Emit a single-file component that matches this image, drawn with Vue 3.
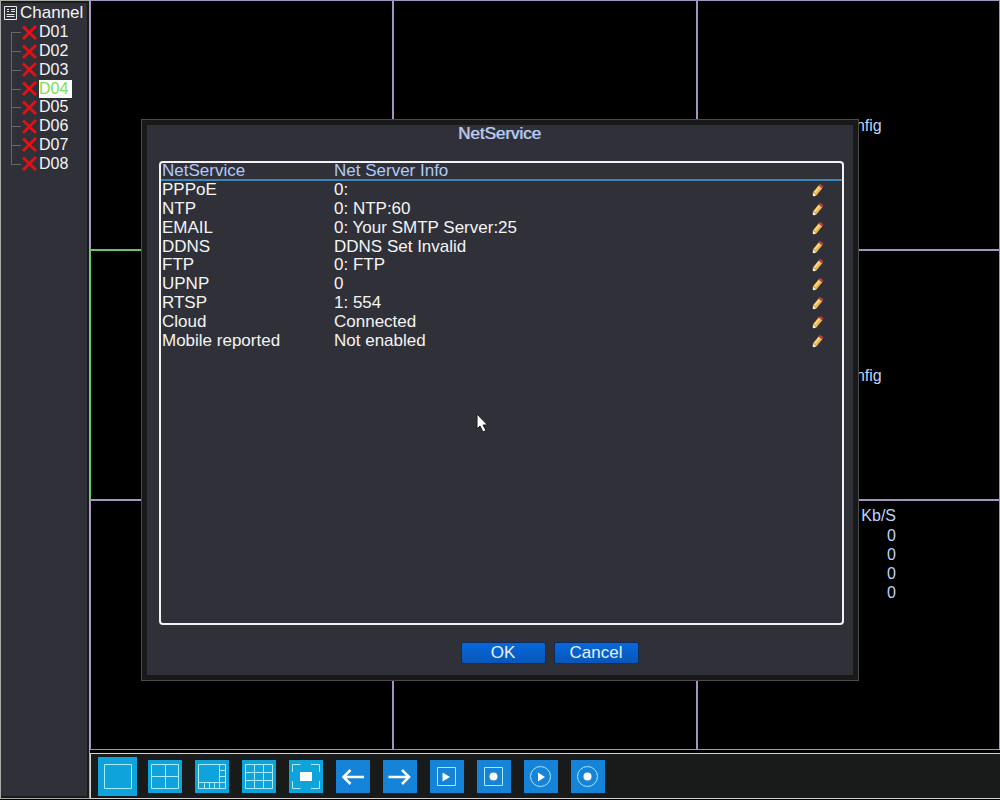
<script setup>
import { ref } from 'vue'

const channels = ['D01', 'D02', 'D03', 'D04', 'D05', 'D06', 'D07', 'D08']
const selected = ref('D04')

const tiles = [
  {}, {}, { note: 'NoConfig' },
  { active: true }, {}, { note: 'NoConfig' },
  {}, {}, { rates: [0, 0, 0, 0] }
]

const services = [
  ['PPPoE', '0:'],
  ['NTP', '0: NTP:60'],
  ['EMAIL', '0: Your SMTP Server:25'],
  ['DDNS', 'DDNS Set Invalid'],
  ['FTP', '0: FTP'],
  ['UPNP', '0'],
  ['RTSP', '1: 554'],
  ['Cloud', 'Connected'],
  ['Mobile reported', 'Not enabled']
]

const tools = [
  { id: 'one', label: 'Single view' },
  { id: 'four', label: 'Four views' },
  { id: 'eight', label: 'Eight views' },
  { id: 'nine', label: 'Nine views' },
  { id: 'full', label: 'Full screen' },
  { id: 'prev', label: 'Previous' },
  { id: 'next', label: 'Next' },
  { id: 'play', label: 'Play' },
  { id: 'record', label: 'Record' },
  { id: 'playAll', label: 'Play all' },
  { id: 'recordAll', label: 'Record all' }
]
const layouts = ['one', 'four', 'eight', 'nine', 'full']
</script>

<template>
  <div class="screen">
    <aside class="sidebar">
      <h2 class="side-title">
        <svg width="13" height="14" viewBox="0 0 13 14" fill="none" stroke="#e8e8e8" aria-hidden="true">
          <path d="M.5 .5h12v13H.5z" />
          <path d="M3 3.500h2M7 3.500h4M3 5.500h2M7 5.500h4M2.500 8.500h8M2.500 10.500h8" />
        </svg>
        Channel
      </h2>
      <ul class="tree">
        <li v-for="c in channels" :key="c">
          <button class="channel" :class="{ on: c === selected }" @click="selected = c">
            <svg width="15" height="15" viewBox="0 0 15 15" aria-hidden="true">
              <path d="M1 1.500 14 14M14 1 1 14" stroke="#e41014" stroke-width="2.800" />
            </svg>
            <span>{{ c }}</span>
          </button>
        </li>
      </ul>
    </aside>

    <main class="stage">
      <div class="wall">
        <section v-for="(t, i) in tiles" :key="i" class="tile" :class="{ active: t.active, stats: t.rates }">
          <span v-if="t.note">{{ t.note }}</span>
          <table v-if="t.rates" class="rates">
            <thead><tr><th>Kb/S</th></tr></thead>
            <tbody><tr v-for="(r, n) in t.rates" :key="n"><td>{{ r }}</td></tr></tbody>
          </table>
        </section>
      </div>

      <nav class="toolbar">
        <button v-for="t in tools" :key="t.id" class="tool" :class="{ big: t.id === 'one', layout: layouts.includes(t.id) }" :aria-label="t.label">
          <svg v-if="t.id === 'one'" viewBox="0 0 39 39"><path d="M6.500 7.500h27v24h-27z" /></svg>
          <svg v-else-if="t.id === 'four'" viewBox="0 0 34 33"><path d="M3.500 4.500h27v24h-27zM17.500 4.500v24M3.500 16.500h27" /></svg>
          <svg v-else-if="t.id === 'eight'" viewBox="0 0 34 33"><path d="M3.500 4.500h27v24h-27zM24.500 4.500v24M3.500 22.500h27M24.500 10.500h6M24.500 16.500h6M9.500 22.500v6M14.500 22.500v6M19.500 22.500v6" /></svg>
          <svg v-else-if="t.id === 'nine'" viewBox="0 0 34 33"><path d="M3.500 4.500h27v24h-27zM12.500 4.500v24M21.500 4.500v24M3.500 12.500h27M3.500 20.500h27" /></svg>
          <svg v-else-if="t.id === 'full'" viewBox="0 0 34 33"><path d="M3.500 12v-7.500h8M22 4.500h8.500V12M30.500 21v7.500H22M11.500 28.500h-8V21" /><path class="solid" d="M11 12h12v9H11z" /></svg>
          <svg v-else-if="t.id === 'prev'" viewBox="0 0 34 33"><path class="bold" d="M28 17H8M14.500 10 7.500 17l7 7" /></svg>
          <svg v-else-if="t.id === 'next'" viewBox="0 0 34 33"><path class="bold" d="M5.500 17h20M19 10l7 7-7 7" /></svg>
          <svg v-else-if="t.id === 'play'" viewBox="0 0 34 33"><path d="M7.500 7.500h18v18h-18z" /><path class="solid" d="M12.500 12.500 20 17l-7.500 4.500z" /></svg>
          <svg v-else-if="t.id === 'record'" viewBox="0 0 34 33"><path d="M7.500 7.500h18v18h-18z" /><circle class="solid" cx="16.500" cy="16.500" r="4" /></svg>
          <svg v-else-if="t.id === 'playAll'" viewBox="0 0 34 33"><circle cx="16.500" cy="16.500" r="10" /><path class="solid" d="M14 12.500 21 17l-7 4.500z" /></svg>
          <svg v-else viewBox="0 0 34 33"><circle cx="16.500" cy="16.500" r="10" /><circle class="solid" cx="16.500" cy="16.500" r="4" /></svg>
        </button>
      </nav>
    </main>

    <div class="overlay">
      <div class="dialog" role="dialog" aria-labelledby="dialog-title">
        <h1 id="dialog-title">NetService</h1>
        <div class="list">
          <table class="services">
            <colgroup><col class="name" /><col /><col class="edit-col" /></colgroup>
            <thead>
              <tr><th>NetService</th><th>Net Server Info</th><th></th></tr>
            </thead>
            <tbody>
              <tr v-for="s in services" :key="s[0]">
                <td>{{ s[0] }}</td>
                <td>{{ s[1] }}</td>
                <td>
                  <button class="edit" :aria-label="'Edit ' + s[0]">
                    <svg width="12" height="14" viewBox="0 0 12 14" aria-hidden="true">
                      <path d="M2.800 10.800 8.500 3.800" stroke="#eeb850" stroke-width="4.600" />
                      <path d="M2.800 9.400 7.200 4" stroke="#ffdf90" stroke-width="1.500" />
                      <path d="M.8 13 .9 9.400 4.600 12.300 2.200 13.300z" fill="#fff0d2" />
                      <path d="M6.500 2.500 8 .8l3.500 2.400-1.200 2z" fill="#b83c48" />
                    </svg>
                  </button>
                </td>
              </tr>
            </tbody>
          </table>
        </div>
        <div class="actions">
          <button class="action">OK</button>
          <button class="action">Cancel</button>
        </div>
      </div>
      <svg class="pointer" width="12" height="20" viewBox="0 0 12 20" aria-hidden="true">
        <path d="M1 1v15l3-3 3 6 3-1.500-3-5.500h4.500z" fill="#fff" stroke="#18181c" />
      </svg>
    </div>
  </div>
</template>

<style>
body {
  margin: 0;
  background: #000;
}
</style>

<style scoped>
.screen {
  position: relative;
  box-sizing: border-box;
  display: grid;
  grid-template-columns: 90px 1fr;
  min-height: 100vh;
  background: #000;
  color: #f4f4f4;
  font: 16px/18px "Liberation Sans", Arial, sans-serif;
}
button {
  padding: 0;
  border: 0;
  background: none;
  color: inherit;
  font: inherit;
}
svg {
  display: block;
}
.sidebar {
  box-sizing: border-box;
  margin-bottom: 1px;
  border: solid #191b1b;
  border-width: 3px 3px 3px 0;
  background: #303138;
  box-shadow: inset 1px 0 #89918b;
  outline: 1px solid #a7aba8;
  outline-offset: -1px;
}
.side-title {
  display: flex;
  align-items: center;
  gap: 3px;
  margin: 0;
  padding-left: 4px;
  font-size: 17px;
  font-weight: 400;
  line-height: 20px;
}
.tree {
  display: grid;
  grid-auto-rows: 1fr;
  height: 150px;
  margin: 0;
  padding: 0 0 0 11px;
  list-style: none;
}
.tree li {
  position: relative;
  display: flex;
  align-items: center;
  padding-left: 11px;
}
.tree li::before {
  content: "";
  position: absolute;
  left: 0;
  top: 0;
  bottom: 0;
  border-left: 1px solid #65666a;
}
.tree li:first-child::before {
  top: 50%;
}
.tree li:last-child::before {
  bottom: 50%;
}
.tree li::after {
  content: "";
  position: absolute;
  left: 0;
  top: 50%;
  width: 10px;
  border-top: 1px solid #65666a;
}
.channel {
  display: flex;
  align-items: center;
  gap: 2px;
}
.channel span {
  padding-right: 4px;
}
.channel.on span {
  background: #fff;
  color: #7be052;
}
.stage {
  display: flex;
  flex-direction: column;
  min-width: 0;
}
.wall {
  flex: 1;
  display: grid;
  grid-template-columns: repeat(3, 1fr);
  grid-template-rows: repeat(3, 1fr);
}
.tile {
  display: flex;
  align-items: center;
  justify-content: center;
  padding-top: 2px;
  border: 1px solid #a294bd;
  color: #bed4fa;
}
.tile.active {
  border-color: #6ec46c;
}
.tile.stats {
  align-items: flex-start;
  justify-content: flex-end;
  padding: 5px 103px 0 0;
}
.rates {
  border-collapse: collapse;
  text-align: right;
}
.rates th {
  padding: 0;
  font-weight: 400;
  line-height: 20px;
}
.rates td {
  padding: 0;
  line-height: 19px;
}
.toolbar {
  display: flex;
  align-items: center;
  gap: 13px;
  margin: 3px 0 1px;
  padding: 3px 7px 2px;
  border: solid #d3d3d0;
  border-width: 1px 0 1px 1px;
  background: #191b1b;
}
.tool {
  width: 34px;
  height: 33px;
  background: #1583d8;
}
.tool.layout {
  background: #0ea3da;
}
.tool.big {
  width: 39px;
  height: 39px;
  margin-right: -2px;
}
.tool svg {
  width: 100%;
  height: 100%;
  fill: none;
  stroke: #a8edff;
}
.tool .solid {
  fill: #fff;
  stroke: none;
}
.tool .bold {
  stroke: #fff;
  stroke-width: 2.5;
}
.overlay {
  position: absolute;
  inset: 0;
  display: flex;
  padding: 119px 141px;
}
.dialog {
  flex: 1;
  display: flex;
  flex-direction: column;
  border: 1px solid #4b4c4a;
  padding: 0 9px 10px 12px;
  background: #303138;
  box-shadow: inset 0 0 0 5px #181a1a;
}
.dialog h1 {
  margin: 5px 0 18px;
  padding-right: 4px;
  color: #bfd0fa;
  font-size: 17px;
  font-weight: 400;
  line-height: 18px;
  text-align: center;
  text-shadow: 1px 0 #bfd0fa88;
}
.list {
  flex: 1;
  margin: 0 5px;
  border: 2px solid #f2f2f2;
  border-radius: 4px;
}
.services {
  width: 100%;
  height: 187px;
  table-layout: fixed;
  border-collapse: separate;
  border-spacing: 0;
  font-size: 17px;
  text-align: left;
}
.services .name {
  width: 172px;
}
.services .edit-col {
  width: 31px;
}
.services th,
.services td {
  padding: 0 0 0 1px;
  font-weight: 400;
  line-height: 18px;
}
.services th {
  border-bottom: 2px solid #3a86b8;
  color: #afc9f8;
  line-height: 16px;
}
.edit {
  display: block;
}
.actions {
  display: flex;
  justify-content: center;
  gap: 8px;
  padding: 17px 0 6px 96px;
}
.action {
  box-sizing: border-box;
  width: 85px;
  height: 22px;
  border: 1px solid #102a58;
  border-radius: 2px;
  background: linear-gradient(#0868dc, #0756b8);
  color: #e4f2ff;
  font-size: 17px;
  line-height: 20px;
}
.pointer {
  position: absolute;
  left: 476px;
  top: 413px;
}
</style>
